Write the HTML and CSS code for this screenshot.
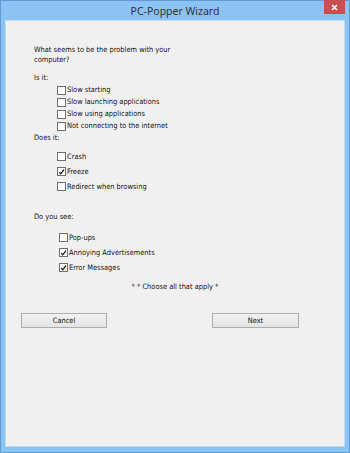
FILE: index.html
```html
<!DOCTYPE html>
<html>
<head>
<meta charset="utf-8">
<link rel="stylesheet" href="styles.css">
</head>
<body>
<div class="window">
  <div class="titlebar">
    <span class="title">PC-Popper Wizard</span>
    <span class="close"><svg width="7" height="7" viewBox="0 0 7 7"><path d="M1 1 L6 6 M6 1 L1 6" stroke="#fff" stroke-width="1.6"/></svg></span>
  </div>
  <div class="client">
    <p class="question">What seems to be the problem with your<br>computer?</p>
    <p class="label is-it">Is it:</p>
    <div class="group g1">
      <label class="row"><span class="box"></span>Slow starting</label>
      <label class="row"><span class="box"></span>Slow launching applications</label>
      <label class="row"><span class="box"></span>Slow using applications</label>
      <label class="row"><span class="box"></span>Not connecting to the internet</label>
    </div>
    <p class="label does-it">Does it:</p>
    <div class="group g2">
      <label class="row"><span class="box"></span>Crash</label>
      <label class="row"><span class="box checked"><svg width="8" height="8" viewBox="0 0 8 8"><path d="M1.3 4.2 L3.2 6.2 L6.8 1.4" fill="none" stroke="#111" stroke-width="1.4"/></svg></span>Freeze</label>
      <label class="row"><span class="box"></span>Redirect when browsing</label>
    </div>
    <p class="label do-you">Do you see:</p>
    <div class="group g3">
      <label class="row"><span class="box"></span>Pop-ups</label>
      <label class="row"><span class="box checked"><svg width="8" height="8" viewBox="0 0 8 8"><path d="M1.3 4.2 L3.2 6.2 L6.8 1.4" fill="none" stroke="#111" stroke-width="1.4"/></svg></span>Annoying Advertisements</label>
      <label class="row"><span class="box checked"><svg width="8" height="8" viewBox="0 0 8 8"><path d="M1.3 4.2 L3.2 6.2 L6.8 1.4" fill="none" stroke="#111" stroke-width="1.4"/></svg></span>Error Messages</label>
    </div>
    <p class="note">* * Choose all that apply *</p>
    <div class="buttons">
      <button class="btn">Cancel</button>
      <button class="btn next">Next</button>
    </div>
  </div>
</div>
</body>
</html>
```
FILE: styles.css
```css
* { box-sizing: border-box; }
html, body { margin: 0; padding: 0; }
body { width: 350px; height: 453px; overflow: hidden; background: #8cc3f4; }
.window {
  width: 350px; height: 453px;
  background: #8cc3f5;
  border: 1px solid #5f9ad3;
  padding: 0 4px 5px 4px;
  display: flex; flex-direction: column;
}
.titlebar {
  height: 19px;
  position: relative;
  display: flex; align-items: center; justify-content: center;
}
.title {
  font-family: "Noto Sans", "Open Sans", sans-serif;
  font-size: 10.5px;
  color: #333;
}
.close {
  position: absolute; right: 0; top: -1px;
  width: 21px; height: 14px;
  background: #c75050;
  display: flex; align-items: center; justify-content: center;
}
.client {
  flex: 1;
  position: relative;
  background: #f0f0f0;
  border: 1px solid #c8dcef;
  padding: 24px 0 0 28px;
  font-family: "DejaVu Sans Condensed", "DejaVu Sans", sans-serif;
  font-size: 7.4px;
  color: #111;
  line-height: 10px;
}
p { margin: 0; }
.is-it { margin-top: 8px; }
.g1 { margin-top: 1px; }
.g1 .row { height: 12px; }
.does-it { margin-top: 1px; }
.g2 { margin-top: 6px; }
.g2 .row, .g3 .row { height: 15px; }
.do-you { margin-top: 18px; }
.g3 { margin-top: 8px; }
.group { padding-left: 23px; }
.g3.group { padding-left: 25px; }
.row { display: flex; align-items: center; white-space: nowrap; }
.box {
  width: 9px; height: 9px;
  border: 1px solid #6f6f6f;
  background: #fff;
  margin-right: 1px;
  display: flex; align-items: center; justify-content: center;
  flex: none;
}
.box svg { display: block; }
.note { margin-top: 7px; text-align: center; margin-left: -28px; }
.buttons { margin-top: 21px; margin-left: -13px; display: flex; }
.btn {
  width: 86px; height: 15px;
  padding: 0;
  border: 1px solid #adadad;
  background: linear-gradient(#f2f2f2, #e3e3e3);
  font-family: "DejaVu Sans Condensed", "DejaVu Sans", sans-serif;
  font-size: 7.4px;
  color: #111;
}
.next { margin-left: 105px; width: 87px; }
```
